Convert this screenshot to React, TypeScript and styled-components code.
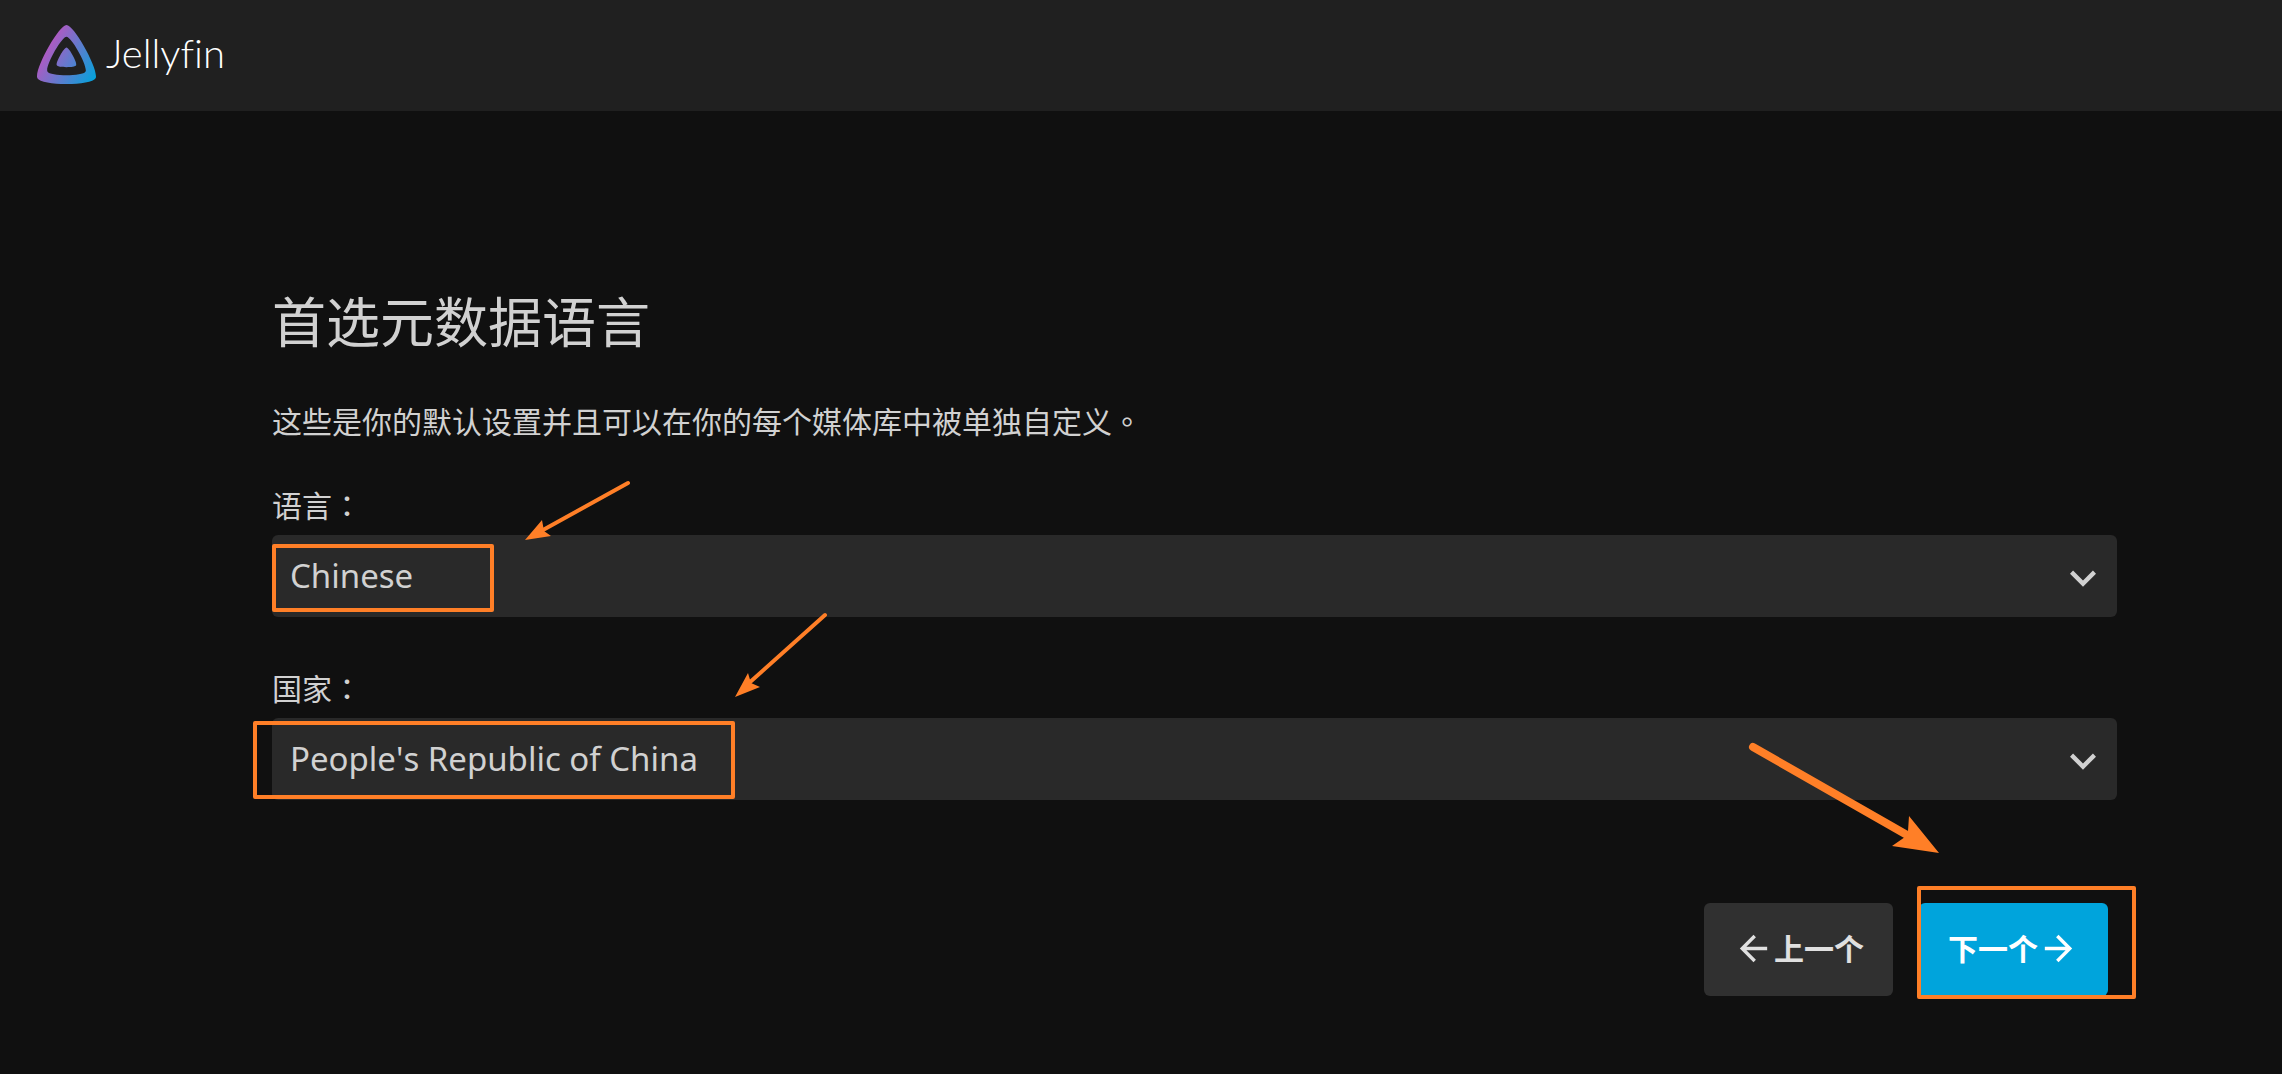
import React from "react";
import styled, { createGlobalStyle } from "styled-components";

const GlobalStyle = createGlobalStyle`
  * { box-sizing: border-box; }
  body {
    margin: 0;
    background: #101010;
    color: #d1d1d1;
    font-family: "Noto Sans", "Noto Sans CJK TC", sans-serif;
    font-size: 30px;
    line-height: 40px;
  }
`;

const Header = styled.header`
  display: flex;
  align-items: center;
  height: 111px;
  padding: 0 37px 2px;
  background: #202020;
`;

const Brand = styled.a`
  display: flex;
  align-items: center;
  gap: 10px;
  color: #ffffff;
  text-decoration: none;
`;

const BrandMark = styled.svg`
  width: 59px;
  height: 59px;
`;

const BrandName = styled.span`
  padding-bottom: 2px;
  font-family: Lato, sans-serif;
  font-weight: 300;
  font-size: 40px;
  font-variant-ligatures: none;
  line-height: 57px;
`;

const Wizard = styled.form`
  padding: 167px 165px 78px 272px;
`;

const Title = styled.h1`
  margin: 0;
  font-weight: 400;
  font-size: 54px;
  line-height: 88px;
`;

const Intro = styled.p`
  margin: 36px 0 44px;
`;

const Field = styled.div`
  position: relative;
  margin-bottom: 52px;
`;

const Label = styled.label`
  display: block;
  margin-bottom: 9px;
`;

const SelectBox = styled.div`
  display: grid;
  align-items: center;
  border-radius: 6px;
  background: #292929;
  > * { grid-area: 1 / 1; }
`;

const Select = styled.select`
  appearance: none;
  width: 100%;
  height: 82px;
  padding: 0 72px 0 18px;
  border: 0;
  border-radius: 6px;
  background: transparent;
  color: inherit;
  font: inherit;
  font-size: 33px;
  font-kerning: none;
`;

const Chevron = styled.svg`
  justify-self: end;
  width: 52px;
  height: 52px;
  margin: 4px 8px 0 0;
  fill: #d1d1d1;
  pointer-events: none;
`;

const Actions = styled.div`
  display: flex;
  justify-content: flex-end;
  gap: 26px;
  margin: 103px 9px 0 0;
`;

const NextSlot = styled.div`
  position: relative;
`;

const Button = styled.button<{ $primary?: boolean }>`
  display: flex;
  align-items: center;
  justify-content: center;
  width: 189px;
  height: 93px;
  padding: 0 0 2px;
  border: 0;
  border-radius: 6px;
  background: ${(p) => (p.$primary ? "#00a4dc" : "#303030")};
  color: ${(p) => (p.$primary ? "#ffffff" : "#e0e0e0")};
  font: inherit;
  font-weight: 600;
`;

const ButtonIcon = styled.svg`
  width: 41px;
  height: 41px;
`;

const Highlight = styled.div<{ $left: number; $top: number; $width: number; $height: number }>`
  position: absolute;
  left: ${(p) => p.$left}px;
  top: ${(p) => p.$top}px;
  width: ${(p) => p.$width}px;
  height: ${(p) => p.$height}px;
  border: 4px solid #ff7f27;
  border-radius: 2px;
  pointer-events: none;
`;

const Pointer = styled.svg<{ $left: number; $top: number }>`
  position: absolute;
  left: ${(p) => p.$left}px;
  top: ${(p) => p.$top}px;
  overflow: visible;
  fill: #ff7f27;
  stroke: #ff7f27;
  pointer-events: none;
  path { stroke: none; }
  line { stroke-linecap: round; }
`;

function JellyfinMark() {
  return (
    <BrandMark viewBox="0 0 512 512" aria-hidden="true">
      <defs>
        <linearGradient id="brand" gradientUnits="userSpaceOnUse" x1="97" y1="214" x2="522" y2="459">
          <stop offset="0" stopColor="#aa5cc3" />
          <stop offset="1" stopColor="#00a4dc" />
        </linearGradient>
      </defs>
      <path
        fill="url(#brand)"
        d="M256 196.200c-22.400 0-94.800 131.300-83.800 153.400s156.800 21.900 167.700 0-61.300-153.400-83.900-153.400z"
      />
      <path
        fill="url(#brand)"
        fillRule="evenodd"
        d="M256 0C188.300 0-29.800 395.400 3.400 462.200s472.300 66 505.200 0S323.800 0 256 0zm165.600 404.300c-21.600 43.200-309.300 43.800-331.100 0S211.700 101.400 256 101.400 443.200 361 421.600 404.300z"
      />
    </BrandMark>
  );
}

function SelectField(props: { id: string; label: string; options: string[]; children?: React.ReactNode }) {
  return (
    <Field>
      <Label htmlFor={props.id}>{props.label}</Label>
      <SelectBox>
        <Select id={props.id}>
          {props.options.map((o) => (
            <option key={o}>{o}</option>
          ))}
        </Select>
        <Chevron viewBox="0 0 24 24" aria-hidden="true">
          <path d="M7.410 8.590 12 13.170l4.590-4.580L18 10l-6 6-6-6z" />
        </Chevron>
      </SelectBox>
      {props.children}
    </Field>
  );
}

export default function App() {
  return (
    <>
      <GlobalStyle />
      <Header>
        <Brand href="#">
          <JellyfinMark />
          <BrandName>Jellyfin</BrandName>
        </Brand>
      </Header>
      <Wizard onSubmit={(e) => e.preventDefault()}>
        <Title>首选元数据语言</Title>
        <Intro>这些是你的默认设置并且可以在你的每个媒体库中被单独自定义。</Intro>
        <SelectField id="language" label="语言：" options={["Chinese"]}>
          <Highlight $left={0} $top={58} $width={222} $height={68} />
          <Pointer $left={253} $top={-5} width="105" height="59" aria-hidden="true">
            <line x1="103" y1="2" x2="18" y2="49" strokeWidth="4" />
            <path d="M0 59 17 39 19 50 26 55z" />
          </Pointer>
        </SelectField>
        <SelectField id="country" label="国家：" options={["People's Republic of China"]}>
          <Highlight $left={-19} $top={52} $width={482} $height={78} />
          <Pointer $left={463} $top={-56} width="93" height="84" aria-hidden="true">
            <line x1="90" y1="2" x2="14" y2="70" strokeWidth="4" />
            <path d="M0 84 13 60 16 70 25 74z" />
          </Pointer>
        </SelectField>
        <Actions>
          <Button type="button">
            <ButtonIcon viewBox="0 0 24 24" fill="currentColor" aria-hidden="true">
              <path d="M20 11H7.830l5.590-5.590L12 4l-8 8 8 8 1.410-1.410L7.830 13H20z" />
            </ButtonIcon>
            上一个
          </Button>
          <NextSlot>
            <Button type="submit" $primary>
              下一个
              <ButtonIcon viewBox="0 0 24 24" fill="currentColor" aria-hidden="true">
                <path d="m12 4-1.410 1.410L16.170 11H4v2h12.170l-5.580 5.590L12 20l8-8z" />
              </ButtonIcon>
            </Button>
            <Highlight $left={-2} $top={-17} $width={219} $height={113} />
            <Pointer $left={-170} $top={-160} width="190" height="110" aria-hidden="true">
              <line x1="4" y1="4" x2="158" y2="92" strokeWidth="8" />
              <path d="M190 110 160 73 159 88 156 94 143 103z" />
            </Pointer>
          </NextSlot>
        </Actions>
      </Wizard>
    </>
  );
}
